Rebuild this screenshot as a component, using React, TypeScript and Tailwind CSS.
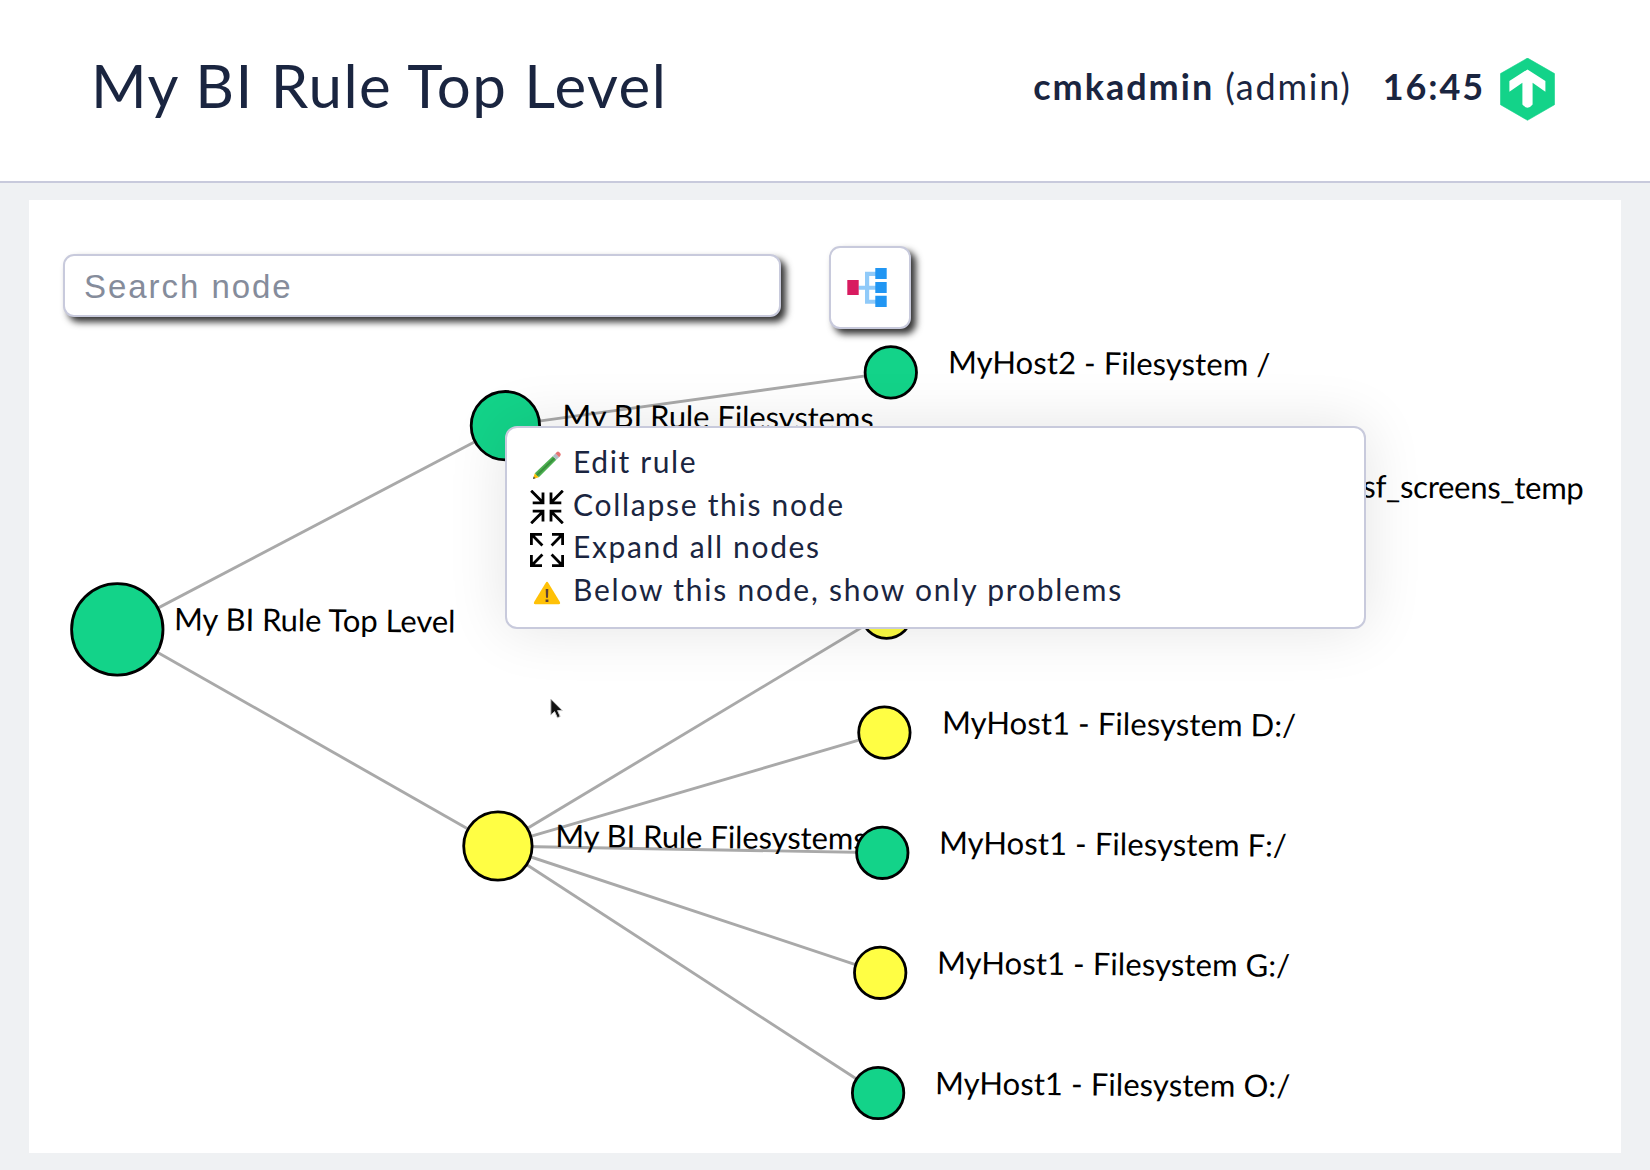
import React from "react";

const GREEN = "#13d389";
const YELLOW = "#fffe44";

type GraphNode = { x: number; y: number; r: number; fill: string };
type Label = { x: number; y: number; text: string; spacing: number };

const top: GraphNode = { x: 117.3, y: 629.4, r: 45.7, fill: GREEN };
const host2: GraphNode = { x: 505.4, y: 425.7, r: 34.2, fill: GREEN };
const host1: GraphNode = { x: 497.9, y: 846, r: 34.2, fill: YELLOW };
const host2Root: GraphNode = { x: 890.8, y: 372.4, r: 25.7, fill: GREEN };
const host1Leaves: GraphNode[] = [
  { x: 886.5, y: 612.6, r: 25.7, fill: YELLOW },
  { x: 884.4, y: 732.6, r: 25.7, fill: YELLOW },
  { x: 882.3, y: 852.8, r: 25.7, fill: GREEN },
  { x: 880.2, y: 972.8, r: 25.7, fill: YELLOW },
  { x: 878.1, y: 1093, r: 25.7, fill: GREEN },
];

const links: [GraphNode, GraphNode][] = [
  [top, host2],
  [top, host1],
  [host2, host2Root],
  ...host1Leaves.map((leaf): [GraphNode, GraphNode] => [host1, leaf]),
];

const labels: Label[] = [
  { x: 174, y: 630.3, text: "My BI Rule Top Level", spacing: -0.06 },
  { x: 562.2, y: 426.9, text: "My BI Rule Filesystems", spacing: -0.08 },
  { x: 555.2, y: 846.9, text: "My BI Rule Filesystems", spacing: -0.08 },
  { x: 948, y: 373.2, text: "MyHost2 - Filesystem /", spacing: 0.09 },
  { x: 1362.3, y: 497.5, text: "sf_screens_temp", spacing: -0.28 },
  { x: 942, y: 733.6, text: "MyHost1 - Filesystem D:/", spacing: 0.1 },
  { x: 939, y: 853.8, text: "MyHost1 - Filesystem F:/", spacing: 0.1 },
  { x: 937, y: 973.8, text: "MyHost1 - Filesystem G:/", spacing: 0.1 },
  { x: 934.9, y: 1094.2, text: "MyHost1 - Filesystem O:/", spacing: 0.1 },
];

function Graph() {
  return (
    <svg className="absolute inset-0 h-full w-full" viewBox="29 200 1592 953">
      {links.map(([a, b], i) => (
        <line key={i} x1={a.x} y1={a.y} x2={b.x} y2={b.y} stroke="#a9a9a9" strokeWidth="2.9" />
      ))}
      {labels.map((l, i) => (
        <text
          key={i}
          transform={`translate(${l.x} ${l.y}) rotate(0.48)`}
          letterSpacing={l.spacing}
          className="fill-black font-[Lato,sans-serif] text-[31px]"
        >
          {l.text}
        </text>
      ))}
      {[top, host2, host1, host2Root, ...host1Leaves].map((n, i) => (
        <circle key={i} cx={n.x} cy={n.y} r={n.r} fill={n.fill} stroke="#000" strokeWidth="2.8" />
      ))}
    </svg>
  );
}

function Logo() {
  return (
    <svg className="h-[63px] w-[55px]" viewBox="0 0 55 63">
      <path
        d="M27.5 .1 54.5 15.6V46.7L27.5 62.3 .5 46.7V15.6Z"
        fill="#13d389"
        stroke="#13d389"
        strokeWidth=".6"
        strokeLinejoin="round"
      />
      <path
        d="M27.5 11.4 45.4 23V33.7L32.6 24.8V46.6Q31 49 27.5 49.8 24 49 22.4 46.6V24.8L9.4 33.7V23Z"
        fill="#fff"
      />
    </svg>
  );
}

function TreeIcon() {
  return (
    <svg className="h-[40px] w-[40px]" viewBox="0 0 40 40">
      <path
        d="M11.5 18.7H18V4.7H29V9H22.2V18.7H29V22.7H22.2V32.7H29V36.8H18V22.7H11.5Z"
        fill="#90caf9"
      />
      <path d="M.3 13H11.7V28H.3Z" fill="#d81b60" />
      <path d="M28.3 1H39.7V12H28.3ZM28.3 15H39.7V26H28.3ZM28.3 28.8H39.7V39.9H28.3Z" fill="#2196f3" />
    </svg>
  );
}

function PencilIcon() {
  return (
    <svg className="h-[34px] w-[34px]" viewBox="0 0 34 34">
      <path d="M3 31 4.8 25.2 8.8 29.2Z" fill="#ffc107" />
      <path d="M3 31 3.7 28.5 5.5 30.3Z" fill="#37474f" />
      <path d="M4.8 25.2 22.7 8.2 26.3 11.8 8.8 29.2Z" fill="#4caf50" />
      <path d="M6.2 26.6 23.9 9.4 25.2 10.7 7.5 27.9Z" fill="#388e3c" />
      <path d="M22.7 8.2 25.4 5.5 29.1 9.2 26.3 11.8Z" fill="#b0bec5" />
      <path d="M25.4 5.5 26.9 4.1Q28 3 29.3 4.2L30.3 5.2Q31.3 6.4 30.3 7.7L29.1 9.2Z" fill="#e57373" />
    </svg>
  );
}

function CollapseIcon() {
  return (
    <svg className="h-[34px] w-[34px]" viewBox="0 0 34 34" fill="none" stroke="#000" strokeWidth="2.8">
      <path d="M1.2 .7 12.4 11.9M2.7 12.9H13V2.4" />
      <path d="M32.8 .7 21.6 11.9M31.3 12.9H21V2.4" />
      <path d="M1.2 33.3 12.4 22.1M2.7 21.1H13V31.6" />
      <path d="M32.8 33.3 21.6 22.1M31.3 21.1H21V31.6" />
    </svg>
  );
}

function ExpandIcon() {
  return (
    <svg className="h-[34px] w-[34px]" viewBox="0 0 34 34" fill="none" stroke="#000" strokeWidth="2.8">
      <path d="M12.4 12.4 1.6 1.6M12 1.4H1.4V12" />
      <path d="M21.6 12.4 32.4 1.6M22 1.4H32.6V12" />
      <path d="M12.4 21.6 1.6 32.4M12 32.6H1.4V22" />
      <path d="M21.6 21.6 32.4 32.4M22 32.6H32.6V22" />
    </svg>
  );
}

function WarningIcon() {
  return (
    <svg className="h-[34px] w-[34px]" viewBox="0 0 34 34">
      <path
        d="M15.6 6.9Q17 4.8 18.4 6.9L29.9 26Q30.7 28.2 28.7 28.3H5.3Q3.3 28.2 4.1 26Z"
        fill="#ffc107"
      />
      <path d="M15.7 13H18.3L18 21.8H16ZM15.6 23.5H18.4V26.1H15.6Z" fill="#5d4037" />
    </svg>
  );
}

const menuItems = [
  { icon: <PencilIcon />, text: "Edit rule", tracking: "tracking-[1.62px]" },
  { icon: <CollapseIcon />, text: "Collapse this node", tracking: "tracking-[1.72px]" },
  { icon: <ExpandIcon />, text: "Expand all nodes", tracking: "tracking-[1.65px]" },
  { icon: <WarningIcon />, text: "Below this node, show only problems", tracking: "tracking-[1.78px]" },
];

function ContextMenu() {
  return (
    <ul className="absolute top-[226px] left-[476px] flex h-[203px] w-[861px] flex-col rounded-xl border-2 border-[#c8cadc] bg-white pt-[15px] pl-[23px] shadow-[0_0_60px_rgba(0,0,0,0.11)]">
      {menuItems.map((item) => (
        <li key={item.text} className="flex h-[42.6px] items-center gap-[9px]">
          <span className="mt-[1px]">{item.icon}</span>
          <span className={`pb-[6px] text-[30px] leading-none whitespace-nowrap ${item.tracking}`}>{item.text}</span>
        </li>
      ))}
    </ul>
  );
}

function Cursor() {
  return (
    <svg className="absolute top-[498px] left-[521px] h-[21px] w-[14px]" viewBox="0 0 14 21">
      <path
        d="M.8 1V17L4.6 13.6 7.4 19.8 10.2 18.5 7.6 12.6H12.4Z"
        fill="#111"
        stroke="#ccc"
        strokeWidth="1"
      />
    </svg>
  );
}

export default function App() {
  return (
    <div className="flex h-[1170px] w-[1650px] flex-col bg-[#eff1f3] font-[Lato,sans-serif] text-[#1a2540]">
      <header className="flex h-[183px] items-center justify-between border-b-2 border-[#c8cadc] bg-white pr-[95px] pl-[91px]">
        <h1 className="pb-[12px] text-[60px] leading-none tracking-[1.48px]">My BI Rule Top Level</h1>
        <div className="flex items-center pb-[3px] text-[36px] leading-none tracking-[1.9px]">
          <span className="mr-[31px] pb-[6px]">
            <b className="tracking-[2px]">cmkadmin</b>
            <span className="tracking-[1.75px]"> (admin)</span>
          </span>
          <b className="mr-[15px] pb-[6px]">16:45</b>
          <Logo />
        </div>
      </header>
      <main className="relative mx-[29px] mt-[17px] h-[953px] bg-white">
        <Graph />
        <div className="relative flex items-start gap-[48px] pt-[46px] pl-[34px]">
          <input
            placeholder="Search node"
            className="mt-[8px] h-[63px] w-[718px] rounded-[11px] border-2 border-[#c8cadc] bg-white pt-[2px] pl-[19px] font-['Liberation_Sans',sans-serif] text-[33px] tracking-[1.95px] shadow-[5px_5px_7px_rgba(0,0,0,0.8)] outline-none placeholder:text-[#858c9b]"
          />
          <button className="flex h-[83px] w-[82px] items-center rounded-[11px] border-2 border-[#c8cadc] bg-white pb-[2px] pl-[16px] shadow-[5px_5px_7px_rgba(0,0,0,0.8)]">
            <TreeIcon />
          </button>
        </div>
        <ContextMenu />
        <Cursor />
      </main>
    </div>
  );
}
